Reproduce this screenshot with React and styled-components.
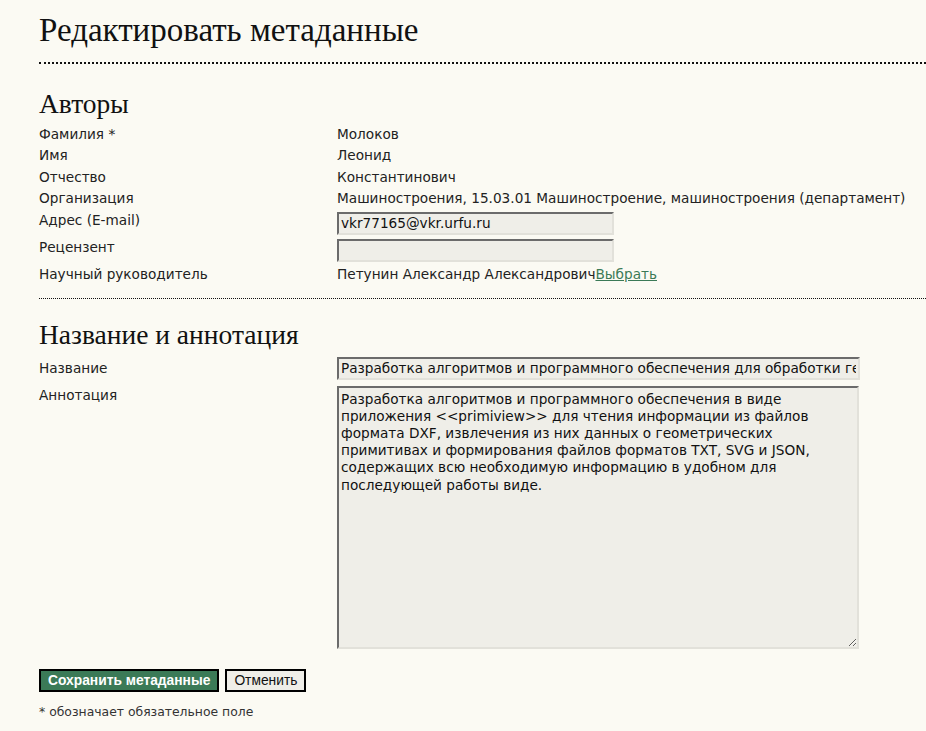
import styled, { createGlobalStyle } from 'styled-components';

const GlobalStyle = createGlobalStyle`
  html, body {
    margin: 0;
    padding: 0;
    background: #fbfaf3;
  }
  body {
    font-family: Verdana, "DejaVu Sans", sans-serif;
    font-size: 13.65px;
    color: #222;
  }
`;

const abstract =
  'Разработка алгоритмов и программного обеспечения в виде приложения <<primiview>> для чтения информации из файлов формата DXF, извлечения из них данных о геометрических примитивах и формирования файлов форматов TXT, SVG и JSON, содержащих всю необходимую информацию в удобном для последующей работы виде.';

const App = () => {
  return (
    <Page>
      <GlobalStyle />
      <Title>Редактировать метаданные</Title>
      <Rule $thick />

      <Heading $top={24}>Авторы</Heading>
      <Grid>
        <Label>Фамилия *</Label>
        <Value>Молоков</Value>
        <Label>Имя</Label>
        <Value>Леонид</Value>
        <Label>Отчество</Label>
        <Value>Константинович</Value>
        <Label>Организация</Label>
        <Value>Машиностроения, 15.03.01 Машиностроение, машиностроения (департамент)</Value>
        <Label>Адрес (E-mail)</Label>
        <Value $field>
          <Input defaultValue="vkr77165@vkr.urfu.ru" $width={277} />
        </Value>
        <Label>Рецензент</Label>
        <Value $field>
          <Input defaultValue="" $width={277} />
        </Value>
        <Label>Научный руководитель</Label>
        <Value>
          Петунин Александр Александрович<Link href="#">Выбрать</Link>
        </Value>
      </Grid>
      <Rule />

      <Heading $top={20}>Название и аннотация</Heading>
      <Grid>
        <Label $offset={3}>Название</Label>
        <Value $field>
          <Input
            defaultValue="Разработка алгоритмов и программного обеспечения для обработки геометрических данных"
            $width={523}
          />
        </Value>
        <Label $offset={3}>Аннотация</Label>
        <Value $field $padTop={4}>
          <TextArea defaultValue={abstract} spellCheck={false} />
        </Value>
      </Grid>

      <Buttons>
        <Button $primary>Сохранить метаданные</Button>
        <Button>Отменить</Button>
      </Buttons>
      <Note>* обозначает обязательное поле</Note>
    </Page>
  );
};

export default App;

const Page = styled.div`
  padding: 10px 0 14px 39px;
`;

const Title = styled.h1`
  margin: 0;
  font-family: Georgia, "Liberation Serif", serif;
  font-weight: normal;
  font-size: 33px;
  line-height: 40px;
  color: #111;
`;

const Rule = styled.div`
  border-top: ${(p) => (p.$thick ? '2px' : '1px')} dotted #111;
  margin-top: ${(p) => (p.$thick ? '12px' : '13px')};
`;

const Heading = styled.h2`
  margin: ${(p) => p.$top}px 0 4.5px;
  font-family: Georgia, "Liberation Serif", serif;
  font-weight: normal;
  font-size: 27.5px;
  line-height: 31px;
  color: #111;
`;

const Grid = styled.div`
  display: grid;
  grid-template-columns: 298px 1fr;
  align-items: start;
`;

const Label = styled.div`
  line-height: 21.5px;
  padding-top: ${(p) => p.$offset || 0}px;
`;

const Value = styled.div`
  line-height: 21.5px;
  white-space: nowrap;
  padding: ${(p) => (p.$field ? `${p.$padTop || 2}px 0 2px` : '0')};
`;

const Input = styled.input`
  box-sizing: border-box;
  display: block;
  width: ${(p) => p.$width}px;
  height: 23px;
  margin: 0;
  padding: 0 2px;
  border: 2px solid;
  border-color: #6b6b6b #e2e1da #e2e1da #6b6b6b;
  background: #efeee8;
  font-family: Verdana, "DejaVu Sans", sans-serif;
  font-size: 13.65px;
  color: #111;
`;

const TextArea = styled.textarea`
  box-sizing: border-box;
  display: block;
  width: 522px;
  height: 263px;
  margin: 0;
  padding: 3px 2px;
  border: 2px solid;
  border-color: #6b6b6b #e2e1da #e2e1da #6b6b6b;
  background: #efeee8;
  font-family: Verdana, "DejaVu Sans", sans-serif;
  font-size: 13.65px;
  line-height: 17.2px;
  color: #111;
  white-space: normal;
`;

const Link = styled.a`
  color: #3b7a57;
  text-decoration: underline;
`;

const Buttons = styled.div`
  display: flex;
  gap: 6px;
  margin-top: 18px;
`;

const Button = styled.button`
  height: 23px;
  margin: 0;
  padding: 0 7px;
  border: 2px solid #000;
  background: ${(p) => (p.$primary ? '#3b7a57' : '#efeee8')};
  color: ${(p) => (p.$primary ? '#fff' : '#111')};
  font-family: Arial, "Liberation Sans", sans-serif;
  font-size: 13.8px;
  font-weight: ${(p) => (p.$primary ? 'bold' : 'normal')};
  cursor: pointer;
`;

const Note = styled.p`
  margin: 12px 0 0;
  font-size: 12.4px;
  line-height: 15px;
  color: #333;
`;
